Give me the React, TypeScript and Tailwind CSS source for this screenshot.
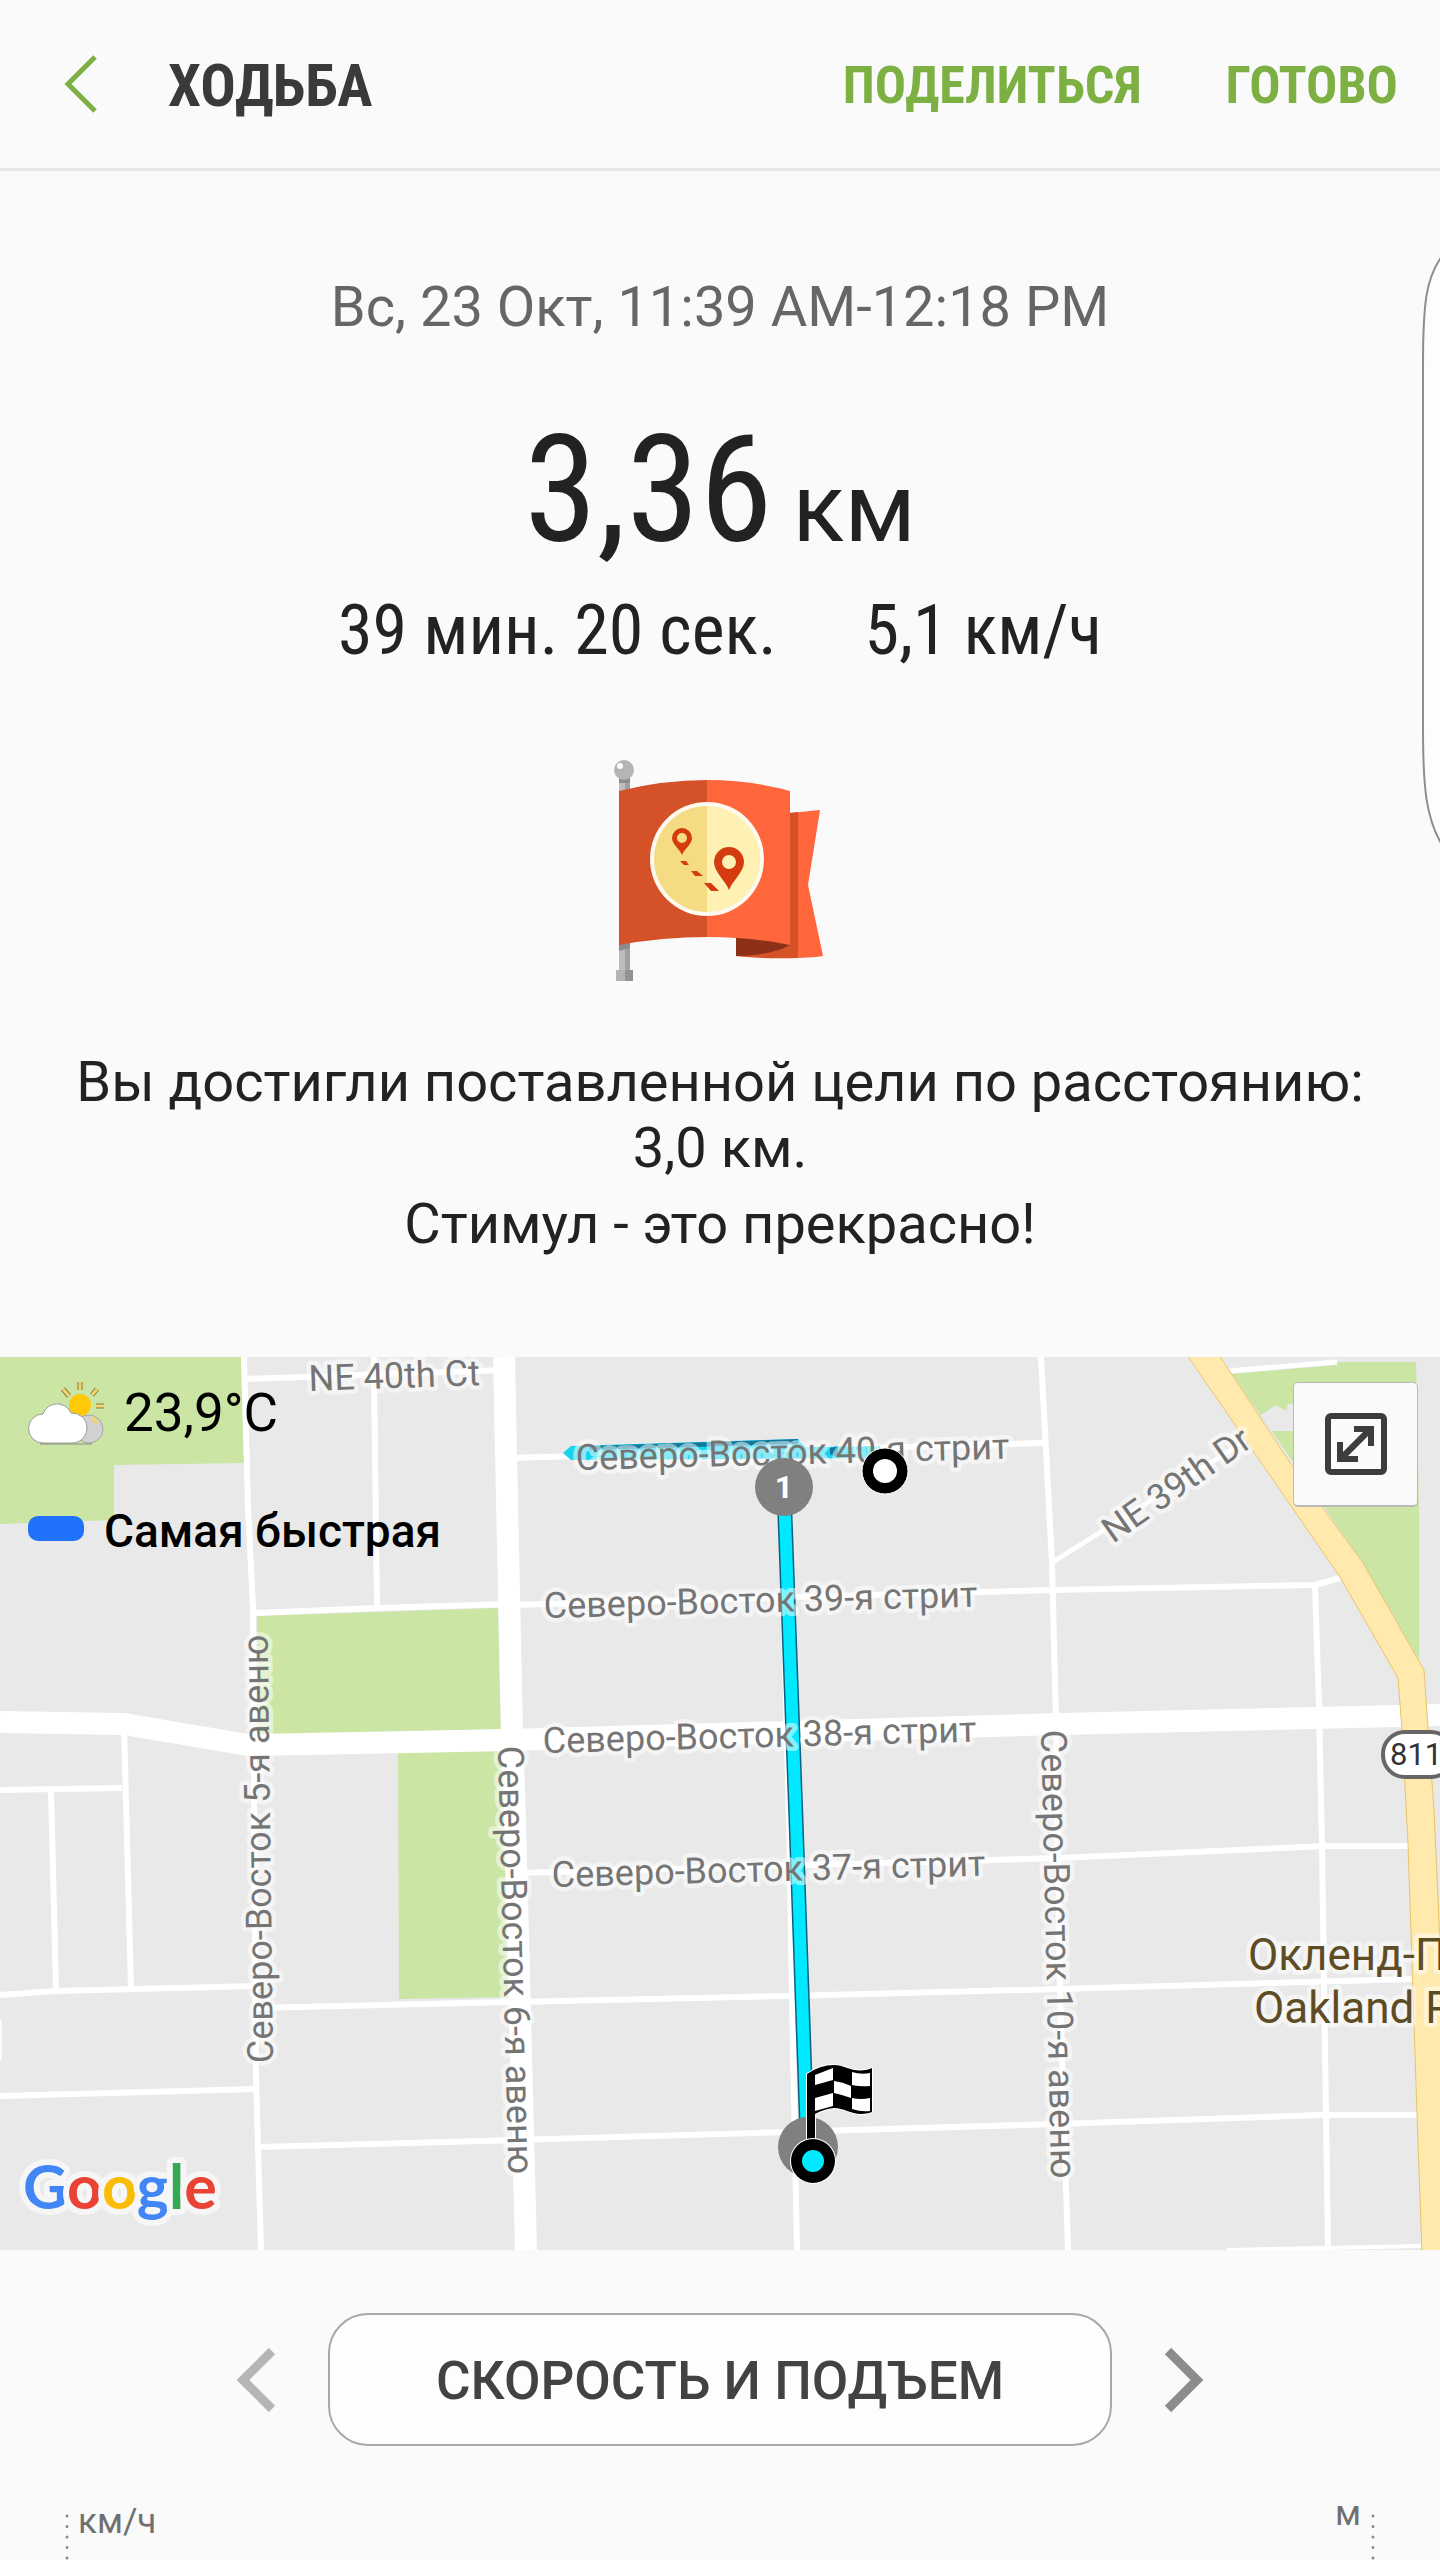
import type { ReactNode } from "react";

type RoadLine = { d: string; width: number };
type StreetLabel = { text: string; x: number; y: number; angle: number };

const PARKS = [
  "M0 0H241L244 106L114 108V163L0 167Z",
  "M257 259L498 251L501 372L257 379Z",
  "M398 394L510 390L515 640L399 642Z",
  "M1232 17L1337 8V5H1416L1419 150V303L1363 206Z",
];

const ROADS: RoadLine[] = [
  { d: "M504 0L512 378L515 463L526 893", width: 22 },
  { d: "M0 365L124 367L248 388L510 383L1060 367L1440 358", width: 22 },
  { d: "M244 0L248 150L253 250L254 443L256 720L261 893", width: 6 },
  { d: "M245 22L504 13", width: 6 },
  { d: "M374 0V20L377 250", width: 6 },
  { d: "M253 256L377 251L510 247", width: 6 },
  { d: "M0 433L122 431", width: 6 },
  { d: "M124 370L131 631", width: 6 },
  { d: "M51 434L56 633", width: 6 },
  { d: "M0 638L56 634L256 629", width: 6 },
  { d: "M0 739L256 732", width: 6 },
  { d: "M256 651L515 645L789 639L1060 632L1413 622", width: 6 },
  { d: "M260 790L515 783L786 775L1056 767L1320 758H1417", width: 6 },
  { d: "M518 516L1060 501L1327 489H1409", width: 6 },
  { d: "M512 248L1053 233L1315 228L1340 221", width: 6 },
  { d: "M508 101L1043 86", width: 6 },
  { d: "M1041 0L1052 205L1056 366L1060 636L1068 893", width: 6 },
  { d: "M780 93L783 226L789 463L792 639L797 893", width: 6 },
  { d: "M1053 205L1247 83", width: 5 },
  { d: "M1315 228L1319 350L1322 489L1328 893", width: 6 },
  { d: "M1228 14L1337 5", width: 5 },
  { d: "M1227 893L1422 889", width: 4 },
  { d: "M0 663V703", width: 3 },
];

const STREETS: StreetLabel[] = [
  { text: "NE 40th Ct", x: 309, y: 34, angle: -2 },
  { text: "Северо-Восток 40-я стрит", x: 576, y: 113, angle: -1.5 },
  { text: "Северо-Восток 39-я стрит", x: 544, y: 261, angle: -1.5 },
  { text: "Северо-Восток 38-я стрит", x: 543, y: 396, angle: -1.5 },
  { text: "Северо-Восток 37-я стрит", x: 552, y: 530, angle: -1.5 },
  { text: "Северо-Восток 5-я авеню", x: 273, y: 706, angle: -90.7 },
  { text: "Северо-Восток 6-я авеню", x: 498, y: 389, angle: 88.6 },
  { text: "Северо-Восток 10-я авеню", x: 1041, y: 373, angle: 88.7 },
  { text: "NE 39th Dr", x: 1113, y: 187, angle: -35 },
];

const GOOGLE = [
  { letter: "G", color: "#4285f4" },
  { letter: "o", color: "#ea4335" },
  { letter: "o", color: "#fbbc05" },
  { letter: "g", color: "#4285f4" },
  { letter: "l", color: "#34a853" },
  { letter: "e", color: "#ea4335" },
];

function Header() {
  return (
    <header className="flex h-[171px] items-center border-b-[3px] border-[#e7e7e7] pr-[42px] pl-[60px] font-['Roboto_Condensed',Roboto,sans-serif] font-bold">
      <button aria-label="Назад" className="mr-[70px]">
        <svg width="38" height="60" viewBox="0 0 38 60" fill="none" stroke="#7cb043" strokeWidth="5">
          <path d="M35 3L8 30L35 57" />
        </svg>
      </button>
      <h1 className="flex-1 pt-[4px] text-[59px] leading-[72px] text-[#3a3a3a]">ХОДЬБА</h1>
      <nav className="flex gap-[84px] pt-[4px] text-[52px] leading-[72px] text-[#7cb043]">
        <button>ПОДЕЛИТЬСЯ</button>
        <button>ГОТОВО</button>
      </nav>
    </header>
  );
}

function EdgeHandle() {
  return (
    <svg
      className="absolute top-[258px] right-0"
      width="18"
      height="585"
      viewBox="0 0 18 585"
      fill="#fdfdfd"
      stroke="#8e8e8e"
      strokeWidth="2"
    >
      <path d="M20 -2C4 20 1 45 1 108V470C1 530 4 560 20 587" />
    </svg>
  );
}

function GoalFlag() {
  return (
    <svg className="mx-auto mt-[87px] block" width="214" height="226" viewBox="0 0 214 226">
      <path d="M6 20H12V214H6Z" fill="#bdbdbd" />
      <path d="M12 20H17V214H12Z" fill="#a0a0a0" />
      <path d="M6 20H17V26H6ZM6 186H17V191L6 194Z" fill="#8c8c8c" />
      <path d="M3 213H12V224H3Z" fill="#b3b3b3" />
      <path d="M12 213H20V224H12Z" fill="#929292" />
      <circle cx="11" cy="13" r="10" fill="#b5b5b5" />
      <circle cx="7" cy="9" r="3" fill="#fff" />
      <path d="M177 56L207 53L195 128L210 199Q184 203 123 199V178H177Z" fill="#ff663c" />
      <path d="M177 56L185 55V201Q150 202 123 199V178H177Z" fill="#d55228" />
      <path d="M123 180H150L177 188Q160 198 123 199Z" fill="#8c3118" />
      <path d="M6 34Q50 23 94 23V180Q50 180 6 188Z" fill="#d55228" />
      <path d="M94 23Q138 23 177 34V188Q138 180 94 180Z" fill="#ff663c" />
      <circle cx="94" cy="102" r="57" fill="#fffaf0" />
      <path d="M94 49A53 53 0 0 0 94 155Z" fill="#f5dc84" />
      <path d="M94 49A53 53 0 0 1 94 155Z" fill="#fff0b4" />
      <g fill="#d43c0f" fillRule="evenodd">
        <path d="M69 98C66 91 59 87 59 81A10 10 0 0 1 79 81C79 87 72 91 69 98ZM69 76A5 5 0 1 0 69 86A5 5 0 1 0 69 76Z" />
        <path d="M116 133C112 123 101 115 101 105A15 15 0 0 1 131 105C131 115 120 123 116 133ZM116 98A7 7 0 1 0 116 112A7 7 0 1 0 116 98Z" />
        <path d="M67 104H73L76 108H71ZM78 114H84L90 119H82ZM91 126H98L106 134H98Z" />
      </g>
    </svg>
  );
}

function Summary() {
  return (
    <section className="pt-[104px] text-center text-[#222]">
      <p className="text-[56px] leading-[64px] text-[#666]">Вс, 23 Окт, 11:39 AM-12:18 PM</p>
      <p className="mt-[77px] flex items-baseline justify-center gap-[20px] font-['Roboto_Condensed',Roboto,sans-serif] text-[148px] leading-[150px]">
        3,36
        <span className="font-['Roboto',sans-serif] text-[96px] leading-[96px]">км</span>
      </p>
      <p className="mt-[24px] flex justify-center gap-[88px] font-['Roboto_Condensed',Roboto,sans-serif] text-[70px] leading-[80px]">
        <span>39 мин. 20 сек.</span>
        <span>5,1 км/ч</span>
      </p>
      <GoalFlag />
      <p className="mt-[66px] px-[60px] text-[56px] leading-[66px]">
        Вы достигли поставленной цели по расстоянию: 3,0 км.
      </p>
      <p className="mt-[10px] text-[56px] leading-[66px]">Стимул - это прекрасно!</p>
    </section>
  );
}

function MapText({ x, y, angle = 0, children }: { x: number; y: number; angle?: number; children: ReactNode }) {
  return (
    <text x={x} y={y} transform={`rotate(${angle} ${x} ${y})`}>
      {children}
    </text>
  );
}

function MapCanvas() {
  return (
    <svg className="block h-auto w-full bg-[#e9e9e9]" viewBox="0 0 1440 893">
      <g fill="#cae5a4">
        {PARKS.map((d) => (
          <path key={d} d={d} />
        ))}
      </g>
      <path d="M1261 58L1276 48L1286 54L1288 47H1310V74H1270Z" fill="#e9e9e9" />
      <g fill="none" stroke="#fff" strokeLinejoin="round">
        {ROADS.map((road) => (
          <path key={road.d} d={road.d} strokeWidth={road.width} />
        ))}
      </g>
      <path
        d="M1187 -2L1340 220L1398 321L1402 373L1408 486L1417 757L1422 895H1450L1439 564L1434 453L1428 370L1424 313L1363 206L1293 110L1219 -2Z"
        fill="#ffe9ad"
        stroke="#e9c46a"
      />
      <rect x="1383" y="375" width="70" height="45" rx="22" fill="#fff" stroke="#666" strokeWidth="4" />
      <text x="1390" y="408" fontSize="31" fill="#333">
        811
      </text>

      {/* route */}
      <path d="M563 96L571 89L798 82L805 90L880 89V101L571 103Z" fill="#19d3ee" />
      <path d="M590 89L798 82V87L590 93ZM830 91L838 89V101L830 97Z" fill="#117a9c" />
      <path d="M784 110L785 160L796 463L807 780" fill="none" stroke="#0b5f80" strokeWidth="15" />
      <path d="M784 110L785 160L796 463L807 780" fill="none" stroke="#00e9ff" strokeWidth="12" />

      <g fontSize="36" fill="#757575" stroke="#fff" strokeOpacity="0.5" strokeWidth="9" strokeLinejoin="round" paintOrder="stroke">
        {STREETS.map((s) => (
          <MapText key={s.text} x={s.x} y={s.y} angle={s.angle}>
            {s.text}
          </MapText>
        ))}
      </g>
      <g fontSize="44" fill="#5e4c24" stroke="#fff" strokeOpacity="0.5" strokeWidth="9" strokeLinejoin="round" paintOrder="stroke">
        <MapText x={1248} y={613}>Окленд-Парк</MapText>
        <MapText x={1254} y={666}>Oakland Park</MapText>
      </g>

      {/* kilometre mark, start and finish */}
      <circle cx="784" cy="130" r="29" fill="#808080" />
      <text x="784" y="141" fontSize="32" fontWeight="700" fill="#fff" textAnchor="middle">
        1
      </text>
      <circle cx="885" cy="114" r="23" fill="#000" stroke="#fff" strokeWidth="1" />
      <circle cx="885" cy="114" r="12" fill="#fff" />
      <circle cx="808" cy="790" r="30" fill="#808080" />
      <path
        d="M807 785V717Q820 708 834 708C846 708 855 718 872 711V755C855 761 846 751 834 751Q824 752 815 757V785Z"
        fill="#000"
        stroke="#fff"
        strokeWidth="2"
        paintOrder="stroke"
      />
      <circle cx="813" cy="804" r="22" fill="#000" stroke="#fff" strokeWidth="2" paintOrder="stroke" />
      <circle cx="813" cy="804" r="11" fill="#00e9ff" />
      <path
        d="M815 718L833 711V723L815 728ZM815 741L833 736V749L815 754ZM834 724Q843 725 851 729V741Q843 738 834 736ZM852 715Q861 718 870 716V729Q861 730 852 728ZM852 741Q861 743 870 741V754Q861 755 852 752Z"
        fill="#fff"
      />

      <text
        x="23"
        y="852"
        className="font-['Lato',sans-serif]"
        fontSize="61"
        fontWeight="700"
        stroke="#f6f6f6"
        strokeWidth="12"
        strokeLinejoin="round"
        paintOrder="stroke"
      >
        {GOOGLE.map((g, i) => (
          <tspan key={i} fill={g.color}>
            {g.letter}
          </tspan>
        ))}
      </text>
    </svg>
  );
}

function WeatherIcon() {
  return (
    <svg width="80" height="68" viewBox="2 0 80 68">
      <path d="M54 3V11M37 10L43 17M71 10L66 16M70 27H78" stroke="#8d7a3a" strokeWidth="5" />
      <path d="M54 3V11M37 10L43 17M71 10L66 16M70 27H78" stroke="#f2d470" strokeWidth="3" />
      <circle cx="63" cy="50" r="14" fill="#d2d2d2" stroke="#a8a8a8" />
      <path d="M66 38L71 44" stroke="#f2d470" strokeWidth="4" />
      <circle cx="54" cy="26" r="11" fill="#ffc907" />
      <path
        d="M17 64A14 14 0 0 1 17 35A15 15 0 0 1 45 34A15 15 0 0 1 47 64Z"
        fill="#fff"
        stroke="#9a9a9a"
        strokeWidth="1"
      />
      <path d="M14 65H66" stroke="#8a8a8a" strokeWidth="1" />
    </svg>
  );
}

function RouteMap() {
  return (
    <section className="relative mt-[100px] overflow-hidden">
      <MapCanvas />
      <div className="absolute top-[20px] left-[28px] text-black">
        <div className="flex items-center gap-[16px] text-[53px] leading-[72px]">
          <WeatherIcon />
          <span>23,9°C</span>
        </div>
        <div className="mt-[54px] flex items-center gap-[20px] text-[46px] leading-[56px] font-medium">
          <span className="mt-[-5px] h-[25px] w-[56px] rounded-[10px] bg-[#2172fb]" />
          <span>Самая быстрая</span>
        </div>
      </div>
      <button
        aria-label="Развернуть карту"
        className="absolute top-[25px] right-[22px] flex size-[125px] items-center justify-center rounded-[5px] border border-b-2 border-[#b9b9b9] bg-[#fafafa]"
      >
        <svg width="62" height="62" viewBox="0 0 62 62">
          <rect x="3" y="3" width="56" height="56" rx="3" fill="none" stroke="#3d3d3d" strokeWidth="6" />
          <path d="M29 13H49V33H43V23L23 43H33V49H12V29H18V39L38 19H29Z" fill="#3d3d3d" />
        </svg>
      </button>
    </section>
  );
}

function ChartSwitcher() {
  return (
    <section className="mt-[63px] flex items-center justify-center gap-[52px]">
      <button aria-label="Предыдущий график" className="text-[#b5b5b5]">
        <svg width="40" height="64" viewBox="0 0 40 64" fill="none" stroke="currentColor" strokeWidth="9">
          <path d="M36 3L7 32L36 61" />
        </svg>
      </button>
      <button className="h-[133px] w-[784px] rounded-[40px] border-2 border-[#a8a8a8] bg-[#fdfdfd] pt-[4px] text-[53px] font-medium text-[#424242]">
        СКОРОСТЬ И ПОДЪЕМ
      </button>
      <button aria-label="Следующий график" className="text-[#8c8c8c]">
        <svg width="40" height="64" viewBox="0 0 40 64" fill="none" stroke="currentColor" strokeWidth="9">
          <path d="M4 3L33 32L4 61" />
        </svg>
      </button>
    </section>
  );
}

function AxisDots() {
  return (
    <svg width="4" height="47" viewBox="0 0 4 47">
      <path d="M2 2V47" stroke="#8a8a8a" strokeWidth="3" strokeLinecap="round" strokeDasharray="0 10.5" />
    </svg>
  );
}

function ChartAxes() {
  return (
    <section className="mt-[48px] flex h-[67px] justify-between px-[65px] text-[35px] leading-[40px] text-[#707070]">
      <div className="flex gap-[9px]">
        <span className="pt-[20px]">
          <AxisDots />
        </span>
        <span className="pt-[8px]">км/ч</span>
      </div>
      <div className="flex gap-[10px]">
        <span>м</span>
        <span className="pt-[20px]">
          <AxisDots />
        </span>
      </div>
    </section>
  );
}

export default function App() {
  return (
    <div className="relative overflow-hidden bg-[#fafafa] font-['Roboto',sans-serif]">
      <Header />
      <EdgeHandle />
      <main>
        <Summary />
        <RouteMap />
        <ChartSwitcher />
        <ChartAxes />
      </main>
    </div>
  );
}
